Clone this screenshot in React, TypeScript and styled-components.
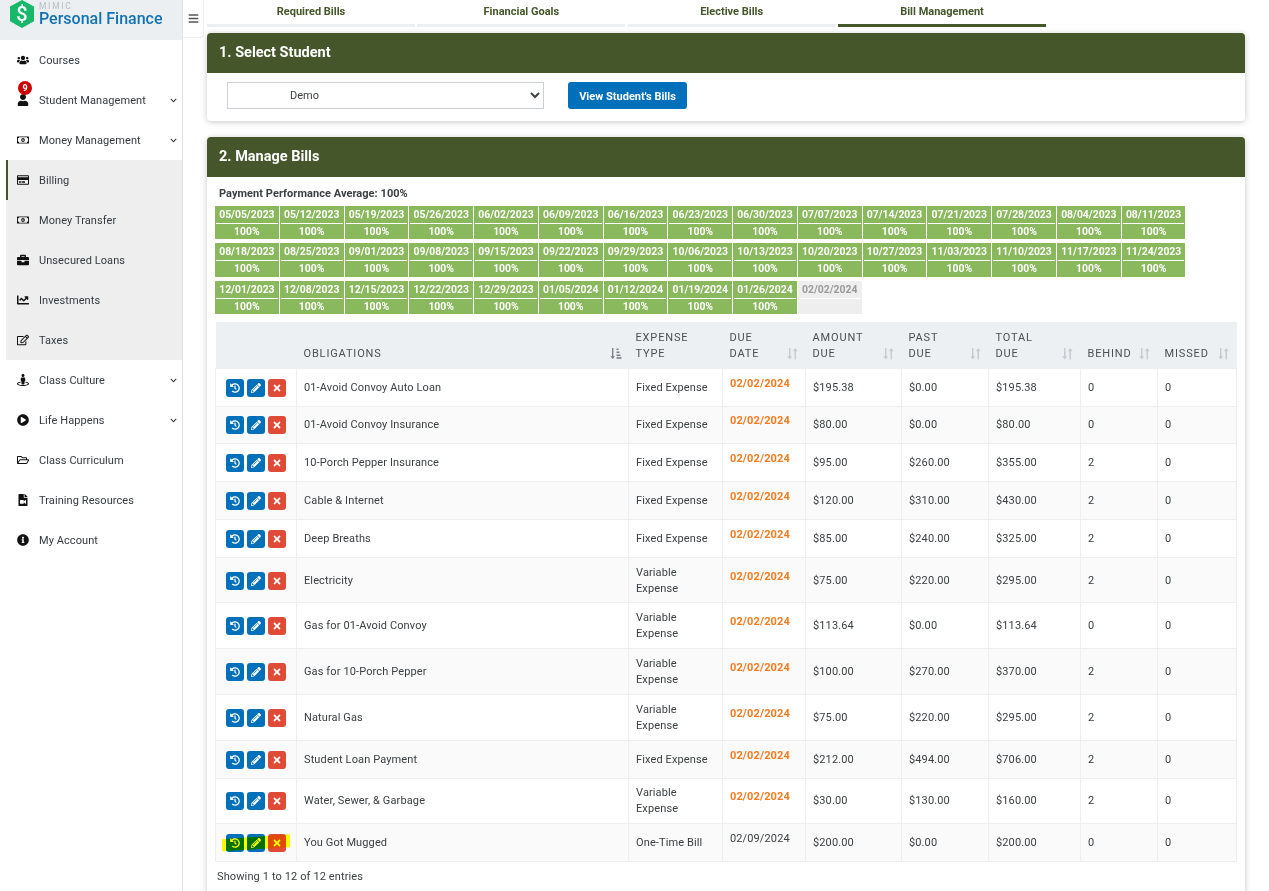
import React from "react";
import styled, { createGlobalStyle } from "styled-components";
import {
  FaBars,
  FaBriefcase,
  FaChartLine,
  FaChevronDown,
  FaFileVideo,
  FaHistory,
  FaInfoCircle,
  FaPencilAlt,
  FaPlayCircle,
  FaRegCreditCard,
  FaRegEdit,
  FaRegFolderOpen,
  FaRegMoneyBillAlt,
  FaStreetView,
  FaTimes,
  FaUser,
  FaUsers,
} from "react-icons/fa";

const OLIVE = "#44562a";
const BLUE = "#0070ba";

const GlobalStyle = createGlobalStyle`
  html, body {
    margin: 0;
    padding: 0;
    height: 891px;
    overflow: hidden;
    background: #fff;
  }
  body {
    font-family: Roboto, "Liberation Sans", sans-serif;
    font-size: 11px;
    color: #3c4043;
  }
  * { box-sizing: border-box; }
`;

const Page = styled.div`
  display: flex;
  align-items: flex-start;
  width: 1269px;
  height: 891px;
  overflow: hidden;
`;

/* ---- sidebar ---- */
const Sidebar = styled.aside`
  flex: 0 0 183px;
  height: 891px;
  border-right: 1px solid #e2e2e2;
  background: #fff;
`;

const Brand = styled.div`
  display: flex;
  align-items: flex-start;
  gap: 5px;
  height: 40px;
  padding-left: 10px;
  background: #eceff1;
  overflow: hidden;
`;

const BrandText = styled.div`
  display: flex;
  flex-direction: column;
  padding-top: 2px;
`;

const BrandSmall = styled.span`
  font-size: 8.5px;
  line-height: 8px;
  letter-spacing: 1.7px;
  color: #b9bcbf;
`;

const BrandName = styled.span`
  font-size: 16px;
  line-height: 17px;
  font-weight: 500;
  color: #1272b6;
`;

const NavGroup = styled.div`
  margin-left: 6px;
  background: #eeeeee;
`;

const NavItem = styled.div<{ $inset?: boolean; $active?: boolean }>`
  display: flex;
  align-items: center;
  height: 40px;
  padding-left: ${(p) => (p.$active ? "9px" : p.$inset ? "11px" : "17px")};
  padding-right: 5px;
  border-left: ${(p) => (p.$active ? `2px solid ${OLIVE}` : "none")};
  color: #333a40;
  font-size: 11px;
  letter-spacing: 0.08px;
`;

const NavIcon = styled.span`
  position: relative;
  display: flex;
  justify-content: center;
  flex: 0 0 12px;
  margin-right: 10px;
  color: #111;
  font-size: 12px;
`;

const NavLabel = styled.span`
  flex: 1;
`;

const Caret = styled(FaChevronDown)`
  font-size: 7px;
  color: #333;
`;

const Badge = styled.span`
  position: absolute;
  top: -13px;
  left: 1px;
  width: 14px;
  height: 14px;
  border-radius: 50%;
  background: #cc0000;
  color: #fff;
  font-size: 9px;
  font-weight: 700;
  line-height: 14px;
  text-align: center;
`;

/* ---- top bar ---- */
const Toggle = styled.div`
  display: flex;
  align-items: center;
  justify-content: center;
  flex: 0 0 21px;
  height: 38px;
  margin-right: 3px;
  border-right: 1px solid #eceff1;
  border-bottom: 1px solid #eceff1;
  border-bottom-right-radius: 4px;
  color: #555;
  font-size: 11px;
`;

const Content = styled.main`
  flex: 0 0 1038px;
`;

const Tabs = styled.nav`
  display: flex;
  gap: 2.33px;
  height: 27px;
  margin-bottom: 6px;
`;

const Tab = styled.div<{ $active?: boolean }>`
  flex: 0 0 208px;
  height: 27px;
  padding-top: 4px;
  border-bottom: 3px solid ${(p) => (p.$active ? OLIVE : "#eceff1")};
  color: ${OLIVE};
  font-size: 11px;
  font-weight: 700;
  line-height: 15px;
  text-align: center;
`;

/* ---- panels ---- */
const Panel = styled.section`
  width: 1037.5px;
  margin-bottom: 16px;
  border-radius: 4px;
  background: #fff;
  box-shadow: 0 1px 6px rgba(0, 0, 0, 0.22);
`;

const PanelHead = styled.h2`
  height: 40px;
  margin: 0;
  padding-left: 12px;
  border-radius: 4px 4px 0 0;
  background: ${OLIVE};
  color: #fff;
  font-size: 14.5px;
  font-weight: 700;
  line-height: 40px;
`;

const SelectRow = styled.div`
  display: flex;
  align-items: flex-start;
  gap: 24px;
  height: 48px;
  padding: 9px 20px 0;
`;

const StudentSelect = styled.select`
  width: 317px;
  height: 27px;
  padding-left: 58px;
  border: 1px solid #ccd0d4;
  background: #fff;
  color: #3c4043;
  font-family: Roboto, "Liberation Sans", sans-serif;
  font-size: 11px;
`;

const ViewButton = styled.button`
  width: 119px;
  height: 27px;
  padding: 1px 0 0;
  border: 0;
  border-radius: 3px;
  background: ${BLUE};
  color: #fff;
  font-family: Roboto, "Liberation Sans", sans-serif;
  font-size: 11px;
  font-weight: 700;
`;

const PanelBody = styled.div`
  padding: 9px 8px 24px;
`;

const Average = styled.div`
  height: 16px;
  margin-bottom: 4px;
  padding-left: 4px;
  color: #3c4043;
  font-weight: 700;
  line-height: 16px;
  letter-spacing: 0.05px;
`;

const Weeks = styled.div`
  display: grid;
  grid-template-columns: repeat(15, 64.78px);
  grid-auto-rows: 33.3px;
  row-gap: 4.2px;
  margin-bottom: 8px;
`;

const Week = styled.div<{ $pending?: boolean }>`
  margin-right: 1px;
  padding: 0 1px;
  background: ${(p) => (p.$pending ? "#eeeeee" : "#8ab85d")};
  color: ${(p) => (p.$pending ? "#999" : "#fff")};
  font-size: 10.4px;
  font-weight: 700;
  text-align: center;
`;

const WeekDate = styled.div`
  height: 18px;
  border-bottom: 1px solid #fff;
  line-height: 17px;
`;

const WeekScore = styled.div`
  line-height: 15px;
`;

/* ---- table ---- */
const Table = styled.table`
  width: 1021px;
  table-layout: fixed;
  border-collapse: collapse;
`;

const Th = styled.th`
  height: 46px;
  padding: 6px 7px;
  background: #ecf0f3;
  color: #4a4f55;
  font-size: 11px;
  font-weight: 400;
  line-height: 16px;
  letter-spacing: 0.85px;
  text-align: left;
  text-transform: uppercase;
  vertical-align: bottom;
`;

const ThInner = styled.div`
  display: flex;
  align-items: flex-end;
  justify-content: space-between;
`;

const ThLabel = styled.span`
  word-spacing: 60px;
`;

const Tr = styled.tr<{ $odd: boolean }>`
  background: ${(p) => (p.$odd ? "#fff" : "#fafafa")};
`;

const Td = styled.td`
  padding: 6.9px 7px 5.9px;
  border: 1px solid #eeeeee;
  color: #3c4043;
  font-size: 11px;
  line-height: 16px;
  letter-spacing: 0.12px;
  vertical-align: middle;
`;

const Actions = styled.div`
  position: relative;
  display: flex;
  gap: 3px;
  width: 60px;
  margin: 3px 0 3px 3px;
`;

const ActionButton = styled.button<{ $danger?: boolean }>`
  display: flex;
  align-items: center;
  justify-content: center;
  width: 18px;
  height: 18px;
  padding: 0;
  border: 0;
  border-radius: 3px;
  background: ${(p) => (p.$danger ? "#e04b38" : BLUE)};
  color: #fff;
  font-size: 10px;
`;

const Highlighter = styled.div`
  position: absolute;
  top: 0;
  left: -4px;
  width: 68px;
  height: 18px;
  background: #ffff00;
  mix-blend-mode: multiply;
  clip-path: polygon(0 5px, 68px 0, 68px 13px, 0 17px);
  pointer-events: none;
`;

const DueDate = styled.div<{ $late: boolean }>`
  margin-bottom: 9px;
  color: ${(p) => (p.$late ? "#f47b20" : "#3c4043")};
  font-weight: ${(p) => (p.$late ? 700 : 400)};
  line-height: 15px;
`;

const Footer = styled.div`
  margin-top: 7px;
  padding-left: 2px;
  color: #3c4043;
  font-size: 11px;
  letter-spacing: 0.12px;
  line-height: 16px;
`;

const SortIcon: React.FC<{ active?: boolean }> = ({ active }) => (
  <svg width="13" height="13" viewBox="0 0 13 13" style={{ flex: "none", marginBottom: 2 }}>
    {active ? (
      <g fill="#7b8187">
        <path d="M3 1h1.4v8.2H6L3.7 12 1.4 9.2H3z" />
        <rect x="7.5" y="1.5" width="2" height="1.6" />
        <rect x="7.5" y="4.5" width="3" height="1.6" />
        <rect x="7.5" y="7.5" width="4" height="1.6" />
        <rect x="7.5" y="10.2" width="5" height="1.6" />
      </g>
    ) : (
      <g fill="#c6ccd1">
        <path d="M3 1h1.5v8.2h1.7L3.75 12.4 1.3 9.2H3z" />
        <path d="M8.5 12.4h1.5V4.2h1.7L9.25 1 6.8 4.2h1.7z" />
      </g>
    )}
  </svg>
);

const nav1 = [
  { label: "Courses", icon: <FaUsers /> },
  { label: "Student Management", icon: <FaUser />, caret: true, badge: "9" },
  { label: "Money Management", icon: <FaRegMoneyBillAlt />, caret: true },
];

const navGroup = [
  { label: "Billing", icon: <FaRegCreditCard />, active: true },
  { label: "Money Transfer", icon: <FaRegMoneyBillAlt /> },
  { label: "Unsecured Loans", icon: <FaBriefcase /> },
  { label: "Investments", icon: <FaChartLine /> },
  { label: "Taxes", icon: <FaRegEdit /> },
];

const nav2 = [
  { label: "Class Culture", icon: <FaStreetView />, caret: true },
  { label: "Life Happens", icon: <FaPlayCircle />, caret: true },
  { label: "Class Curriculum", icon: <FaRegFolderOpen /> },
  { label: "Training Resources", icon: <FaFileVideo /> },
  { label: "My Account", icon: <FaInfoCircle /> },
];

const weeks = [
  "05/05/2023", "05/12/2023", "05/19/2023", "05/26/2023", "06/02/2023", "06/09/2023", "06/16/2023", "06/23/2023",
  "06/30/2023", "07/07/2023", "07/14/2023", "07/21/2023", "07/28/2023", "08/04/2023", "08/11/2023",
  "08/18/2023", "08/25/2023", "09/01/2023", "09/08/2023", "09/15/2023", "09/22/2023", "09/29/2023", "10/06/2023",
  "10/13/2023", "10/20/2023", "10/27/2023", "11/03/2023", "11/10/2023", "11/17/2023", "11/24/2023",
  "12/01/2023", "12/08/2023", "12/15/2023", "12/22/2023", "12/29/2023", "01/05/2024", "01/12/2024", "01/19/2024",
  "01/26/2024",
];

const colWidths = [81, 332, 94, 83, 96, 87, 92, 77, 79];

const headers = [
  { label: "" },
  { label: "Obligations", active: true },
  { label: "Expense Type" },
  { label: "Due Date", sort: true },
  { label: "Amount Due", sort: true },
  { label: "Past Due", sort: true },
  { label: "Total Due", sort: true },
  { label: "Behind", sort: true },
  { label: "Missed", sort: true },
];

const FE = "Fixed Expense";
const VE = "Variable Expense";
const bills = [
  ["01-Avoid Convoy Auto Loan", FE, "02/02/2024", "$195.38", "$0.00", "$195.38", "0", "0"],
  ["01-Avoid Convoy Insurance", FE, "02/02/2024", "$80.00", "$0.00", "$80.00", "0", "0"],
  ["10-Porch Pepper Insurance", FE, "02/02/2024", "$95.00", "$260.00", "$355.00", "2", "0"],
  ["Cable & Internet", FE, "02/02/2024", "$120.00", "$310.00", "$430.00", "2", "0"],
  ["Deep Breaths", FE, "02/02/2024", "$85.00", "$240.00", "$325.00", "2", "0"],
  ["Electricity", VE, "02/02/2024", "$75.00", "$220.00", "$295.00", "2", "0"],
  ["Gas for 01-Avoid Convoy", VE, "02/02/2024", "$113.64", "$0.00", "$113.64", "0", "0"],
  ["Gas for 10-Porch Pepper", VE, "02/02/2024", "$100.00", "$270.00", "$370.00", "2", "0"],
  ["Natural Gas", VE, "02/02/2024", "$75.00", "$220.00", "$295.00", "2", "0"],
  ["Student Loan Payment", FE, "02/02/2024", "$212.00", "$494.00", "$706.00", "2", "0"],
  ["Water, Sewer, & Garbage", VE, "02/02/2024", "$30.00", "$130.00", "$160.00", "2", "0"],
  ["You Got Mugged", "One-Time Bill", "02/09/2024", "$200.00", "$0.00", "$200.00", "0", "0"],
];

const App: React.FC = () => {
  return (
    <Page>
      <GlobalStyle />
      <Sidebar>
        <Brand>
          <svg width="24" height="29" viewBox="0 0 24 29">
            <path d="M12 0l12 6.6v14.6L12 28 0 21.2V6.6z" fill="#17b86a" />
            <text x="12" y="21" fill="#fff" fontFamily="Roboto, sans-serif" fontSize="20" fontWeight="500" textAnchor="middle">
              $
            </text>
          </svg>
          <BrandText>
            <BrandSmall>MIMIC</BrandSmall>
            <BrandName>Personal Finance</BrandName>
          </BrandText>
        </Brand>
        {nav1.map((item) => (
          <NavItem key={item.label}>
            <NavIcon>
              {item.icon}
              {item.badge && <Badge>{item.badge}</Badge>}
            </NavIcon>
            <NavLabel>{item.label}</NavLabel>
            {item.caret && <Caret />}
          </NavItem>
        ))}
        <NavGroup>
          {navGroup.map((item) => (
            <NavItem key={item.label} $inset $active={item.active}>
              <NavIcon>{item.icon}</NavIcon>
              <NavLabel>{item.label}</NavLabel>
            </NavItem>
          ))}
        </NavGroup>
        {nav2.map((item) => (
          <NavItem key={item.label}>
            <NavIcon>{item.icon}</NavIcon>
            <NavLabel>{item.label}</NavLabel>
            {item.caret && <Caret />}
          </NavItem>
        ))}
      </Sidebar>

      <Toggle>
        <FaBars />
      </Toggle>

      <Content>
        <Tabs>
          <Tab>Required Bills</Tab>
          <Tab>Financial Goals</Tab>
          <Tab>Elective Bills</Tab>
          <Tab $active>Bill Management</Tab>
        </Tabs>

        <Panel>
          <PanelHead>1. Select Student</PanelHead>
          <SelectRow>
            <StudentSelect defaultValue="demo">
              <option value="demo">Demo</option>
            </StudentSelect>
            <ViewButton>View Student's Bills</ViewButton>
          </SelectRow>
        </Panel>

        <Panel>
          <PanelHead>2. Manage Bills</PanelHead>
          <PanelBody>
            <Average>Payment Performance Average: 100%</Average>
            <Weeks>
              {weeks.map((d) => (
                <Week key={d}>
                  <WeekDate>{d}</WeekDate>
                  <WeekScore>100%</WeekScore>
                </Week>
              ))}
              <Week $pending>
                <WeekDate>02/02/2024</WeekDate>
              </Week>
            </Weeks>

            <Table>
              <colgroup>
                {colWidths.map((w, i) => (
                  <col key={i} width={w} />
                ))}
              </colgroup>
              <thead>
                <tr>
                  {headers.map((h, i) => (
                    <Th key={i}>
                      <ThInner>
                        <ThLabel>{h.label}</ThLabel>
                        {h.active && <SortIcon active />}
                        {h.sort && <SortIcon />}
                      </ThInner>
                    </Th>
                  ))}
                </tr>
              </thead>
              <tbody>
                {bills.map((b, i) => (
                  <Tr key={b[0]} $odd={i % 2 === 0}>
                    <Td>
                      <Actions>
                        <ActionButton><FaHistory /></ActionButton>
                        <ActionButton><FaPencilAlt /></ActionButton>
                        <ActionButton $danger><FaTimes /></ActionButton>
                        {i === bills.length - 1 && <Highlighter />}
                      </Actions>
                    </Td>
                    <Td>{b[0]}</Td>
                    <Td>{b[1]}</Td>
                    <Td>
                      <DueDate $late={b[2] === "02/02/2024"}>{b[2]}</DueDate>
                    </Td>
                    <Td>{b[3]}</Td>
                    <Td>{b[4]}</Td>
                    <Td>{b[5]}</Td>
                    <Td>{b[6]}</Td>
                    <Td>{b[7]}</Td>
                  </Tr>
                ))}
              </tbody>
            </Table>
            <Footer>Showing 1 to 12 of 12 entries</Footer>
          </PanelBody>
        </Panel>
      </Content>
    </Page>
  );
};

export default App;
